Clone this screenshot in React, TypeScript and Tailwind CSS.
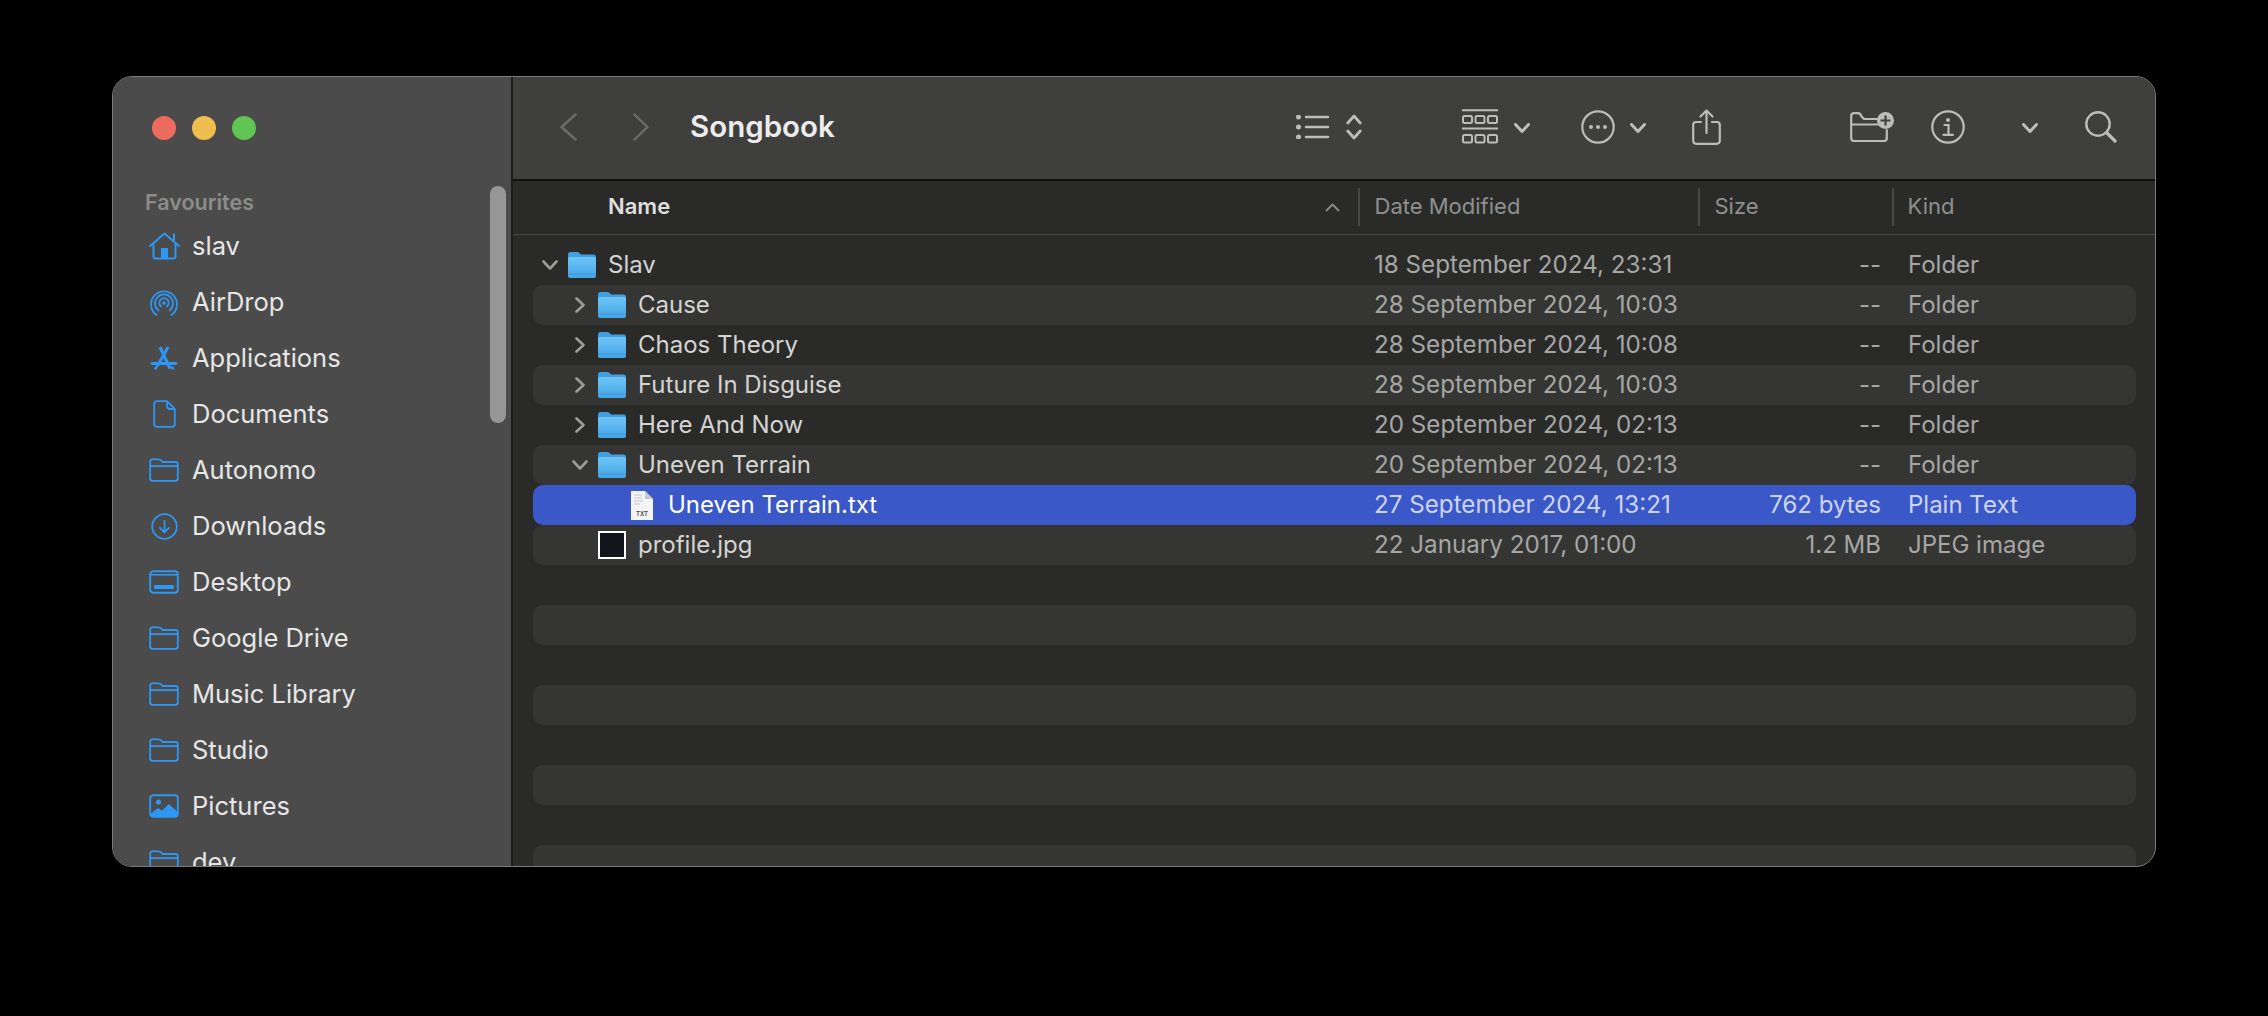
import React from "react";

const C = "#bcbcbb";
const B = "#2e97f5";

function Chev({ dir = "down", w = 16, h = 10, color = C, sw = 3, className = "" }: { dir?: string; w?: number; h?: number; color?: string; sw?: number; className?: string }) {
  const d = dir === "down" ? `M1.5 1.5 L${w / 2} ${h - 1.5} L${w - 1.5} 1.5` : dir === "up" ? `M1.5 ${h - 1.5} L${w / 2} 1.5 L${w - 1.5} ${h - 1.5}` : dir === "right" ? `M1.5 1.5 L${w - 1.5} ${h / 2} L1.5 ${h - 1.5}` : `M${w - 1.5} 1.5 L1.5 ${h / 2} L${w - 1.5} ${h - 1.5}`;
  return (
    <svg width={w} height={h} viewBox={`0 0 ${w} ${h}`} fill="none" className={className}>
      <path d={d} stroke={color} strokeWidth={sw} strokeLinecap="round" strokeLinejoin="round" />
    </svg>
  );
}

function OutlineFolder() {
  return (
    <svg width="30" height="24" viewBox="0 0 30 24" fill="none">
      <path d="M1.2 20.500V3.500Q1.200 1.300 3.400 1.300H9.500Q11 1.300 12 2.400L13.600 4H26.500Q28.800 4 28.800 6.300V20.500Q28.800 22.800 26.500 22.800H3.400Q1.200 22.800 1.200 20.500ZM1.200 8.200H28.800" stroke={B} strokeWidth="1.800" strokeLinejoin="round" />
    </svg>
  );
}

function SideIcon({ name }: { name: string }) {
  switch (name) {
    case "home":
      return (
        <svg width="31" height="28" viewBox="0 0 31 28" fill="none">
          <path d="M1 14L15.500 1.500L30 14M4.500 11V24.500Q4.500 26.500 6.500 26.500H24.500Q26.500 26.500 26.500 24.500V11M25 8V2.500" stroke={B} strokeWidth="2" strokeLinecap="round" strokeLinejoin="round" />
          <rect x="12" y="16" width="7" height="10" fill={B} />
        </svg>
      );
    case "air":
      return (
        <svg width="28" height="27" viewBox="0 0 28 27" fill="none" stroke={B} strokeWidth="1.800" strokeLinecap="round">
          <path d="M6.500 26A13 13 0 1 1 21.500 26" />
          <path d="M8.500 21.500A9 9 0 1 1 19.500 21.500" />
          <path d="M11 17.500A4.700 4.700 0 1 1 17 17.500" />
          <circle cx="14" cy="14" r="1.700" fill={B} stroke="none" />
        </svg>
      );
    case "apps":
      return (
        <svg width="28" height="25" viewBox="0 0 28 25" fill="none" stroke={B} strokeLinecap="round">
          <path d="M10.500 2L19.500 21.500" strokeWidth="3" />
          <path d="M17.500 2L8 19" strokeWidth="3" />
          <path d="M2 17.500H26" strokeWidth="2.800" />
          <path d="M5.500 22.500L6.500 21M22 21.500L23 22.500" strokeWidth="2.600" />
        </svg>
      );
    case "doc":
      return (
        <svg width="23" height="28" viewBox="0 0 23 28" fill="none" stroke={B} strokeWidth="1.800" strokeLinejoin="round">
          <path d="M14 1.200H4Q1.200 1.200 1.200 4V24Q1.200 26.800 4 26.800H19Q21.800 26.800 21.800 24V9ZM14 1.200V6Q14 9 17 9H21.800" />
        </svg>
      );
    case "down":
      return (
        <svg width="27" height="27" viewBox="0 0 27 27" fill="none" stroke={B} strokeWidth="1.800" strokeLinecap="round" strokeLinejoin="round">
          <circle cx="13.500" cy="13.500" r="12.300" />
          <path d="M13.500 8V19M9 14.800L13.500 19.300L18 14.800" />
        </svg>
      );
    case "desk":
      return (
        <svg width="30" height="24" viewBox="0 0 30 24" fill="none">
          <rect x="1.200" y="1.200" width="27.600" height="21.600" rx="3" stroke={B} strokeWidth="1.900" />
          <path d="M1.200 4.800H28.800" stroke={B} strokeWidth="1.600" />
          <rect x="5" y="15" width="20" height="4" rx="1" fill={B} />
        </svg>
      );
    case "pic":
      return (
        <svg width="30" height="24" viewBox="0 0 30 24" fill="none">
          <rect x="1.200" y="1.200" width="27.600" height="21.600" rx="3" stroke={B} strokeWidth="1.900" />
          <circle cx="9.500" cy="8" r="2.600" fill={B} />
          <path d="M1.200 20L9 14L13 16.500L20 10L28.800 18V21Q28.800 22.800 26.800 22.800H3.200Q1.200 22.800 1.200 21Z" fill={B} />
        </svg>
      );
    default:
      return <OutlineFolder />;
  }
}

function BlueFolder() {
  return (
    <svg width="28" height="26" viewBox="0 0 28 26" className="shrink-0">
      <defs>
        <linearGradient id="fg" x1="0" y1="0" x2="0" y2="1">
          <stop offset="0" stopColor="#6fc5f7" />
          <stop offset="1" stopColor="#46a5e6" />
        </linearGradient>
      </defs>
      <path d="M0 3Q0 0 2.500 0H9Q10.500 0 11.500 1L13 2.500H25.500Q28 2.500 28 5V8H0Z" fill="#3f9fe2" />
      <path d="M0 6.500Q0 5 2 5H26Q28 5 28 6.500V24Q28 26 26 26H2Q0 26 0 24Z" fill="url(#fg)" />
      <path d="M0 22H28" stroke="#3a93d4" strokeWidth="1" />
    </svg>
  );
}

function TxtIcon() {
  return (
    <div className="relative w-[22px] h-[29px] shrink-0">
      <svg width="22" height="29" viewBox="0 0 22 29">
        <path d="M0 0H14L22 8V29H0Z" fill="#f4f4f4" />
        <path d="M14 0L22 8H14Z" fill="#c9c9c9" />
        <path d="M3 4H11M3 7H11M3 10H12M3 13H9" stroke="#c7c7c7" strokeWidth="1" />
      </svg>
      <span className="absolute left-0 right-0 bottom-[3px] text-center text-[6px] leading-[7px] font-semibold text-[#444]">TXT</span>
    </div>
  );
}

function Thumb() {
  return <div className="w-[28px] h-[28px] border-2 border-white bg-[#12151c] shrink-0" />;
}

const sideItems = [
  ["home", "slav"],
  ["air", "AirDrop"],
  ["apps", "Applications"],
  ["doc", "Documents"],
  ["folder", "Autonomo"],
  ["down", "Downloads"],
  ["desk", "Desktop"],
  ["folder", "Google Drive"],
  ["folder", "Music Library"],
  ["folder", "Studio"],
  ["pic", "Pictures"],
  ["folder", "dev"],
];

type Row = { name: string; date: string; size: string; kind: string; indent: number; open?: boolean; closed?: boolean; icon: string; sel?: boolean };
const rows: Row[] = [
  { name: "Slav", date: "18 September 2024, 23:31", size: "--", kind: "Folder", indent: 0, open: true, icon: "f" },
  { name: "Cause", date: "28 September 2024, 10:03", size: "--", kind: "Folder", indent: 1, closed: true, icon: "f" },
  { name: "Chaos Theory", date: "28 September 2024, 10:08", size: "--", kind: "Folder", indent: 1, closed: true, icon: "f" },
  { name: "Future In Disguise", date: "28 September 2024, 10:03", size: "--", kind: "Folder", indent: 1, closed: true, icon: "f" },
  { name: "Here And Now", date: "20 September 2024, 02:13", size: "--", kind: "Folder", indent: 1, closed: true, icon: "f" },
  { name: "Uneven Terrain", date: "20 September 2024, 02:13", size: "--", kind: "Folder", indent: 1, open: true, icon: "f" },
  { name: "Uneven Terrain.txt", date: "27 September 2024, 13:21", size: "762 bytes", kind: "Plain Text", indent: 2, icon: "t", sel: true },
  { name: "profile.jpg", date: "22 January 2017, 01:00", size: "1.2 MB", kind: "JPEG image", indent: 1, icon: "p" },
];

function FileRow({ r, i }: { r: Row; i: number }) {
  const bg = r.sel ? "bg-[#3b58c9]" : i % 2 === 1 ? "bg-[#353634]" : "";
  const pl = r.indent === 0 ? "pl-[35px]" : r.indent === 1 ? "pl-[65px]" : "pl-[98px]";
  const nameCol = r.sel ? "text-white" : "text-[#d4d4d3]";
  const sub = r.sel ? "text-[#cdd4f5]" : "text-[#a6a6a5]";
  return (
    <div className={`h-[40px] rounded-[10px] flex items-center text-[24px] leading-[40px] ${bg}`}>
      <div className={`w-[841px] flex items-center ${pl} ${nameCol}`}>
        {r.open && (
          <div className="w-[16px] flex justify-center mr-[10px] -ml-[26px]">
            <Chev dir="down" w={16} h={10} color="#9b9b9a" sw={2.6} />
          </div>
        )}
        {r.closed && (
          <div className="w-[16px] flex justify-center mr-[10px] -ml-[26px]">
            <Chev dir="right" w={10} h={16} color="#9b9b9a" sw={2.6} />
          </div>
        )}
        {r.icon === "f" && <BlueFolder />}
        {r.icon === "t" && <TxtIcon />}
        {r.icon === "p" && <Thumb />}
        <span className={r.indent === 2 ? "ml-[15px]" : r.indent === 1 ? "ml-[12px]" : "ml-[12px]"}>{r.name}</span>
      </div>
      <div className={`w-[340px] text-[24.2px] ${sub}`}>{r.date}</div>
      <div className={`w-[167px] text-right ${sub}`}>{r.size}</div>
      <div className={`ml-[27px] ${sub}`}>{r.kind}</div>
    </div>
  );
}

export default function App() {
  return (
    <div className="w-full h-screen bg-black pt-[76px] pl-[112px] overflow-hidden" style={{ fontFamily: "Inter, 'Liberation Sans', sans-serif" }}>
      <div className="relative w-[2044px] h-[791px] rounded-[20px] border border-[#7b7c7a] bg-[#2a2b29] flex overflow-hidden">
        {/* Sidebar */}
        <aside className="relative w-[400px] shrink-0 bg-[#4a4b4a] border-r-2 border-[#1b1b1b] overflow-hidden">
          <div className="flex gap-[16px] pl-[39px] pt-[39px]">
            <div className="w-[24px] h-[24px] rounded-full bg-[#ec6a5e]" />
            <div className="w-[24px] h-[24px] rounded-full bg-[#f0be4f]" />
            <div className="w-[24px] h-[24px] rounded-full bg-[#61c554]" />
          </div>
          <div className="mt-[45px] pl-[32px] h-[33px] text-[21.5px] leading-[34px] font-semibold text-[#8b8c8b]">Favourites</div>
          <div>
            {sideItems.map(([ic, label]) => (
              <div key={label} className="h-[56px] flex items-center pl-[34px]">
                <div className="w-[34px] flex justify-center shrink-0">
                  <SideIcon name={ic} />
                </div>
                <span className="ml-[11px] text-[25.5px] text-[#e6e6e6]">{label}</span>
              </div>
            ))}
          </div>
          <div className="absolute left-[377px] top-[109px] w-[16px] h-[237px] rounded-full bg-[#969696]" />
        </aside>

        {/* Main */}
        <main className="flex-1 min-w-0 flex flex-col overflow-hidden">
          <header className="h-[104px] shrink-0 bg-[#3f403e] border-b-2 border-[#111] flex items-center pb-[3px] pr-[38px]">
            <Chev dir="left" w={17} h={28} color="#6b6c6a" sw={2.4} className="ml-[47px]" />
            <Chev dir="right" w={16} h={28} color="#6b6c6a" sw={2.4} className="ml-[56px]" />
            <div className="ml-[41px] flex-1 text-[29.5px] font-semibold text-[#ececec]">Songbook</div>

            <svg width="34" height="24" viewBox="0 0 34 24" fill="none" stroke={C} strokeWidth="2.400" strokeLinecap="round">
              <path d="M10 2H32M10 12H32M10 22H32" />
              <circle cx="2.500" cy="2" r="1.300" fill={C} />
              <circle cx="2.500" cy="12" r="1.300" fill={C} />
              <circle cx="2.500" cy="22" r="1.300" fill={C} />
            </svg>
            <svg width="16" height="26" viewBox="0 0 16 26" fill="none" stroke={C} strokeWidth="2.800" strokeLinecap="round" strokeLinejoin="round" className="ml-[16px]">
              <path d="M1.800 9L8 2L14.200 9M1.800 17L8 24L14.200 17" />
            </svg>

            <svg width="36" height="35" viewBox="0 0 36 35" fill="none" stroke={C} strokeWidth="2" className="ml-[100px]">
              <path d="M0 1.200H36M0 19.500H36" />
              <rect x="1" y="7" width="9" height="7" rx="1.500" />
              <rect x="13.500" y="7" width="9" height="7" rx="1.500" />
              <rect x="26" y="7" width="9" height="7" rx="1.500" />
              <rect x="1" y="26" width="9" height="7.500" rx="1.500" />
              <rect x="13.500" y="26" width="9" height="7.500" rx="1.500" />
              <rect x="26" y="26" width="9" height="7.500" rx="1.500" />
            </svg>
            <Chev className="ml-[16px] mt-[2px]" />

            <svg width="34" height="34" viewBox="0 0 34 34" fill="none" className="ml-[51px]">
              <circle cx="17" cy="17" r="15.700" stroke={C} strokeWidth="2.200" />
              <circle cx="10" cy="17" r="2" fill={C} />
              <circle cx="17" cy="17" r="2" fill={C} />
              <circle cx="24" cy="17" r="2" fill={C} />
            </svg>
            <Chev className="ml-[15px] mt-[2px]" />

            <svg width="29" height="36" viewBox="0 0 29 36" fill="none" stroke={C} strokeWidth="2.200" strokeLinecap="round" strokeLinejoin="round" className="ml-[46px]">
              <path d="M9 13H4Q1.200 13 1.200 16V31.500Q1.200 34.800 4.500 34.800H24.500Q27.800 34.800 27.800 31.500V16Q27.800 13 25 13H20" />
              <path d="M14.500 24V1.500M8.500 7.500L14.500 1.500L20.500 7.500" />
            </svg>

            <svg width="44" height="30" viewBox="0 0 44 30" fill="none" className="ml-[129px]">
              <path d="M28 7H14L11.500 4.500Q10.500 1.200 8 1.200H4Q1.200 1.200 1.200 4V26Q1.200 29 4 29H34Q36.800 29 36.800 26V18M1.200 12.500H28" stroke={C} strokeWidth="2.200" strokeLinejoin="round" strokeLinecap="round" />
              <circle cx="35.500" cy="8.500" r="8.500" fill={C} />
              <path d="M35.500 3.500V13.500M30.500 8.500H40.500" stroke="#3f403e" strokeWidth="2.200" />
            </svg>

            <svg width="34" height="34" viewBox="0 0 34 34" fill="none" className="ml-[37px]">
              <circle cx="17" cy="17" r="15.700" stroke={C} strokeWidth="2.200" />
              <circle cx="17" cy="10" r="2" fill={C} />
              <path d="M13.500 15H17.500V24.500M12.500 24.800H22" stroke={C} strokeWidth="2.200" strokeLinecap="round" />
            </svg>

            <Chev className="ml-[57px] mt-[2px]" />

            <svg width="32" height="32" viewBox="0 0 32 32" fill="none" stroke={C} strokeWidth="2.400" strokeLinecap="round" className="ml-[47px]">
              <circle cx="13" cy="13" r="11.700" />
              <path d="M21.500 21.500L30 30" strokeWidth="3.200" />
            </svg>
          </header>

          <div className="h-[54px] shrink-0 bg-[#2a2b29] border-b border-[#454644] flex items-center pb-[2px] text-[22px] relative">
            <div className="w-[845px] pl-[95px] font-semibold text-[#dedede] flex items-center">
              <span className="flex-1">Name</span>
              <Chev dir="up" w={15} h={9} color="#8b8b8a" sw={1.800} className="mr-[18px] mt-[2px]" />
            </div>
            <div className="w-[1.500px] h-[38px] bg-[#474846]" />
            <div className="w-[338.500px] pl-[15px] text-[#8f908f]">Date Modified</div>
            <div className="w-[1.500px] h-[38px] bg-[#474846]" />
            <div className="w-[192.500px] pl-[15px] text-[#8f908f]">Size</div>
            <div className="w-[1.500px] h-[38px] bg-[#474846]" />
            <div className="pl-[14px] text-[#8f908f]">Kind</div>
          </div>

          <div className="flex-1 overflow-hidden pt-[10px] pl-[20px] pr-[19px]">
            {rows.map((r, i) => (
              <FileRow key={r.name} r={r} i={i} />
            ))}
            {[8, 9, 10, 11, 12, 13, 14, 15].map((i) => (
              <div key={i} className={`h-[40px] rounded-[10px] ${i % 2 === 1 ? "bg-[#353634]" : ""}`} />
            ))}
          </div>
        </main>
      </div>
    </div>
  );
}
